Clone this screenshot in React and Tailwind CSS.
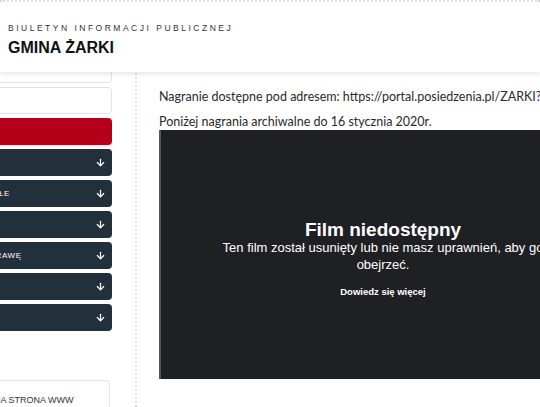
import React from "react";
import { ArrowDown } from "lucide-react";

function DarkBtn({ label }) {
  return (
    <div className="flex h-[27px] shrink-0 items-center rounded-[4px] bg-[#22303c] pr-[6px] text-white">
      <span className="flex-1 text-center text-[8px] tracking-[0.6px] uppercase">{label}</span>
      <ArrowDown size={11} strokeWidth={2.6} />
    </div>
  );
}

export default function App() {
  return (
    <div className="relative h-[407px] w-[540px] overflow-hidden bg-white font-['Liberation_Sans',Arial,sans-serif]">
      <header className="absolute left-0 right-0 top-0 z-10 h-[72px] border-t-2 border-dotted border-[#dcdcdc] bg-white shadow-[0_3px_4px_rgba(0,0,0,0.08)]">
        <div className="pl-[8px] pt-[21px]">
          <div className="text-[8.5px] leading-[10px] tracking-[2.5px] text-[#333]">BIULETYN INFORMACJI PUBLICZNEJ</div>
          <div className="mt-[5px] text-[16px] font-black leading-[19px] text-[#111]">GMINA ŻARKI</div>
        </div>
      </header>

      <div className="flex h-full">
        <aside className="ml-[-128px] flex w-[240px] shrink-0 flex-col gap-[4px] pt-[56px]">
          <div className="flex h-[27px] shrink-0 items-center justify-end rounded-[4px] border border-[#e3e3e3] pr-[80px] text-[8px] tracking-[0.6px] text-[#444]">
            STRONA GŁÓWNA GMINY
          </div>
          <div className="h-[27px] shrink-0 rounded-[4px] border border-[#e3e3e3] bg-white" />
          <div className="h-[27px] shrink-0 rounded-[4px] bg-[#b5001a]" />
          <DarkBtn label="RADA" />
          <DarkBtn label="POZOSTAŁE" />
          <DarkBtn label="URZĄD" />
          <DarkBtn label="ZAŁATW SPRAWĘ" />
          <DarkBtn label="PRAWO" />
          <DarkBtn label="MAPA" />
          <div className="mr-[2px] mt-[45px] h-[40px] shrink-0 rounded-[4px] border border-[#e3e3e3] pl-[84px] pt-[13px] text-[9px] text-[#333]">
            OFICJALNA STRONA WWW
          </div>
        </aside>

        <div className="ml-[23px] w-0 border-l-2 border-dotted border-[#e2e2e2]" />

        <main className="ml-[22px] flex w-[446px] shrink-0 flex-col pt-[88px] font-['Lato',sans-serif] text-[12.5px] leading-[17px] text-[#2a2a2a]">
          <p className="mb-[9px] whitespace-nowrap">Nagranie dostępne pod adresem: https://portal.posiedzenia.pl/ZARKI?</p>
          <p className="whitespace-nowrap leading-[16px]">Poniżej nagrania archiwalne do 16 stycznia 2020r.</p>
          <div className="flex h-[249px] w-[446px] shrink-0 flex-col items-center justify-center border-l-2 border-[#555] bg-[#1f2024] pt-[10px] text-center font-['Liberation_Sans',Arial,sans-serif] text-white">
            <div className="text-[19px] font-bold leading-[22px]">Film niedostępny</div>
            <div className="mt-[-2px] max-w-[330px] text-[13px] leading-[17px]">Ten film został usunięty lub nie masz uprawnień, aby go obejrzeć.</div>
            <div className="mt-[10px] text-[9.5px] font-bold">Dowiedz się więcej</div>
          </div>
        </main>
      </div>
    </div>
  );
}
